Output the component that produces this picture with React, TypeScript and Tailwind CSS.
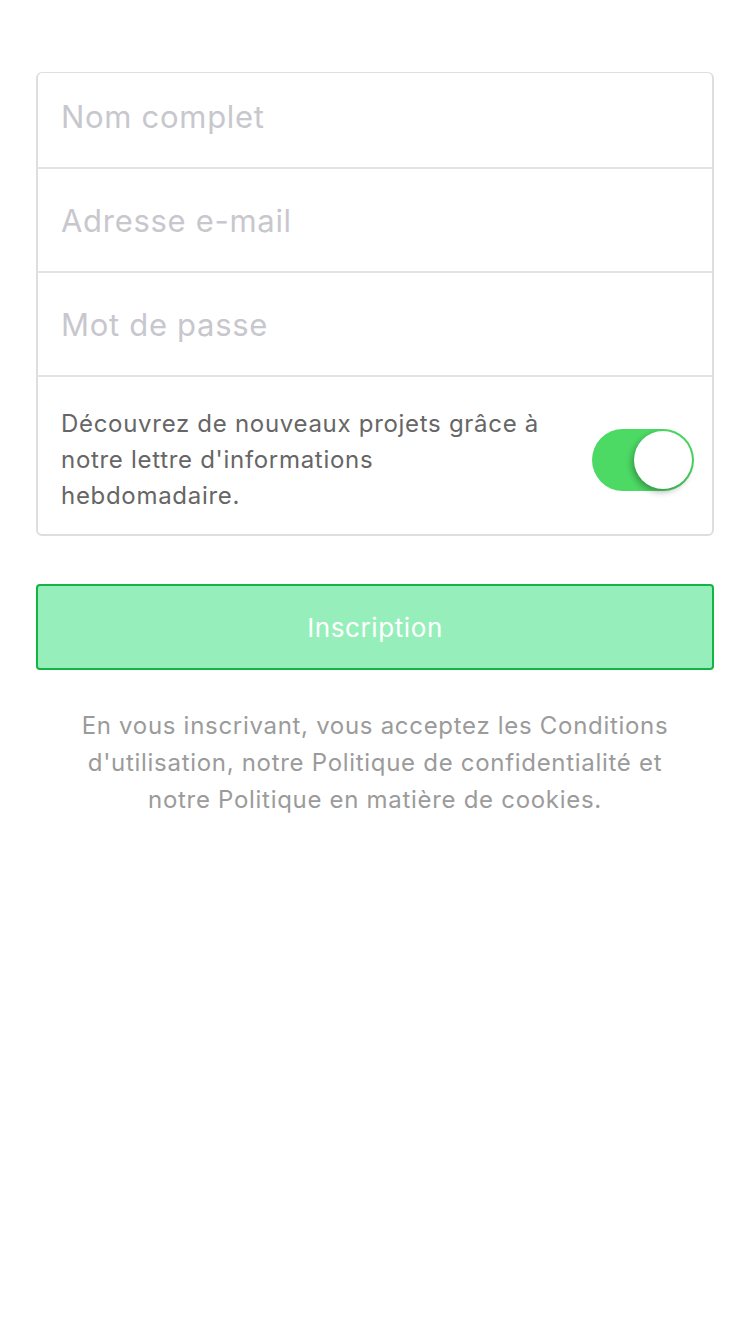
import React from "react";

export default function App() {
  return (
    <div className="min-h-[1334px] w-[750px] bg-white font-['Inter',sans-serif]">
      <div className="px-[36px] pt-[72px]">
        <div className="overflow-hidden rounded-[6px] border-2 border-[#dedede] border-t-[1px] border-b-[2px]">
          <div className="flex h-[96px] items-center border-b-2 border-[#e3e3e3] px-[23px] pb-[7px]">
            <span className="text-[31px] leading-none text-[#c7c7cd] tracking-[0.7px]">Nom complet</span>
          </div>
          <div className="flex h-[104px] items-center border-b-2 border-[#e3e3e3] px-[23px]">
            <span className="text-[31px] leading-none text-[#c7c7cd] tracking-[0.7px]">Adresse e-mail</span>
          </div>
          <div className="flex h-[104px] items-center border-b-2 border-[#e3e3e3] px-[23px]">
            <span className="text-[31px] leading-none text-[#c7c7cd] tracking-[0.7px]">Mot de passe</span>
          </div>
          <div className="flex h-[157px] items-center justify-between pl-[23px] pr-[18px] pt-[8px]">
            <p className="text-[24px] leading-[36px] text-[#666666] tracking-[0.7px]">
              Découvrez de nouveaux projets grâce à
              <br />
              notre lettre d'informations
              <br />
              hebdomadaire.
            </p>
            <div className="relative h-[62px] w-[102px] rounded-full bg-[#4cd964]">
              <div className="absolute right-[2px] top-[2px] h-[58px] w-[58px] rounded-full bg-white shadow-[-2px_3px_6px_rgba(0,0,0,0.3)]" />
            </div>
          </div>
        </div>

        <button className="mt-[48px] flex h-[86px] w-full items-center justify-center rounded-[4px] border-2 border-[#12b443] bg-[#96efbb]">
          <span className="text-[26px] text-white tracking-[0.6px]">Inscription</span>
        </button>

        <p className="mt-[37px] text-center text-[24px] leading-[37px] text-[#9b9b9b] tracking-[0.7px]">
          En vous inscrivant, vous acceptez les Conditions
          <br />
          d'utilisation, notre Politique de confidentialité et
          <br />
          notre Politique en matière de cookies.
        </p>
      </div>
    </div>
  );
}
